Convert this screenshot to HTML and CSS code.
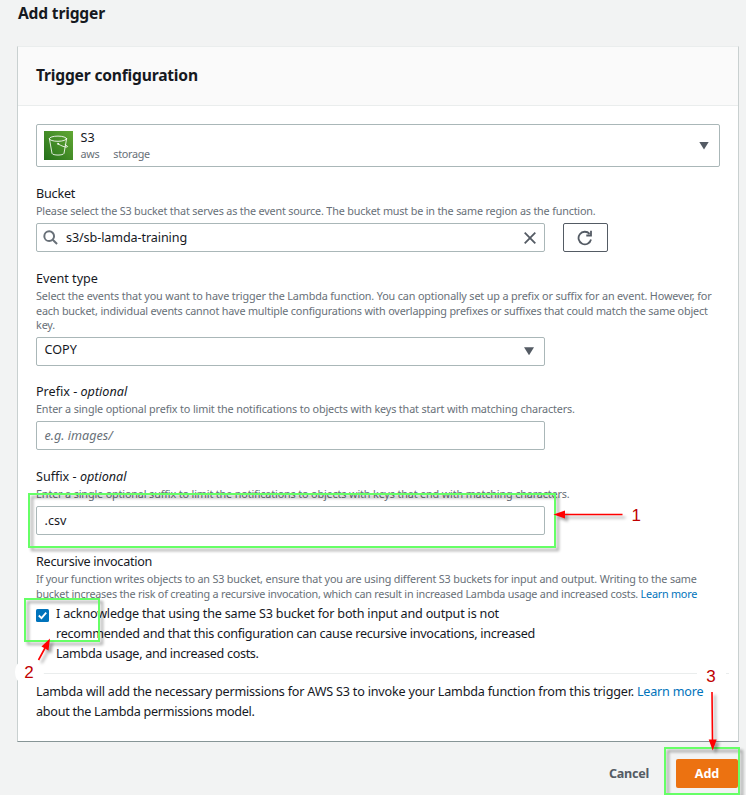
FILE: index.html
```html
<!DOCTYPE html>
<html lang="en">
<head>
<meta charset="utf-8">
<title>Add trigger</title>
<link rel="stylesheet" href="styles.css">
</head>
<body>
<main class="page">
  <h1 class="page-title">Add trigger</h1>
  <section class="card">
    <header class="card-header"><h2>Trigger configuration</h2></header>
    <div class="card-body">
      <div class="source-select">
        <svg class="s3" viewBox="0 0 29 29">
          <defs><linearGradient id="g" x1="0" y1="1" x2="1" y2="0"><stop offset="0" stop-color="#24701a"/><stop offset="1" stop-color="#62a834"/></linearGradient></defs>
          <rect width="29" height="29" fill="url(#g)"/>
          <g fill="none" stroke="#fff" stroke-width=".85" stroke-linecap="round" stroke-linejoin="round"><ellipse cx="14" cy="7.7" rx="8.6" ry="2.6"/><path d="M5.4 7.7 8 22.4c.8 2.200 11.200 2.200 12 0l2.600-14.700M14.200 13c3 1.800 7 3.500 9 3 1-.5-.2-1.300-2-2.200"/><circle cx="14" cy="12.800" r=".6"/></g>
        </svg>
        <div class="source-text"><div class="source-name">S3</div><div class="tags"><span>aws</span><span>storage</span></div></div>
        <i class="caret"></i>
      </div>

      <div class="field bucket">
        <label class="tight">Bucket</label>
        <p class="hint snug">Please select the S3 bucket that serves as the event source. The bucket must be in the same region as the function.</p>
        <div class="row">
          <div class="input searchbox"><svg class="search" viewBox="0 0 16 16"><circle cx="6.600" cy="6.600" r="5.200"/><path d="m10.400 10.400 4.600 4.600"/></svg><span class="value">s3/sb-lamda-training</span><svg class="clear" viewBox="0 0 12 12"><path d="m.7.700 10.600 10.600M11.300.7.700 11.300"/></svg></div>
          <button class="refresh" aria-label="Refresh"><svg viewBox="0 0 16 16"><path d="M14 9.500A6.300 6.300 0 1 1 12.600 3.900M14 .8v4.700H9.300"/></svg></button>
        </div>
      </div>

      <div class="field">
        <label>Event type</label>
        <p class="hint"><span>Select the events that you want to have trigger the Lambda function. You can optionally set up a prefix or suffix for an event. However, for</span><br><span class="snug">each bucket, individual events cannot have multiple configurations with overlapping prefixes or suffixes that could match the same object</span><br>key.</p>
        <div class="input select"><span class="value">COPY</span><i class="caret"></i></div>
      </div>

      <div class="field prefix">
        <label>Prefix - <em>optional</em></label>
        <p class="hint">Enter a single optional prefix to limit the notifications to objects with keys that start with matching characters.</p>
        <div class="input"><span class="value placeholder">e.g. images/</span></div>
      </div>

      <div class="field suffix">
        <label>Suffix - <em>optional</em></label>
        <p class="hint">Enter a single optional suffix to limit the notifications to objects with keys that end with matching characters.</p>
        <div class="input"><span class="value">.csv</span></div>
      </div>

      <div class="field recursive">
        <label class="tighter">Recursive invocation</label>
        <p class="hint"><span class="close">If your function writes objects to an S3 bucket, ensure that you are using different S3 buckets for input and output. Writing to the same</span><br><span class="dense">bucket increases the risk of creating a recursive invocation, which can result in increased Lambda usage and increased costs. <a>Learn more</a></span></p>
        <div class="ack"><svg class="check" viewBox="0 0 13 13"><rect width="13" height="13" rx="1.500"/><path d="m2.800 6.500 2.700 2.700 4.700-5.600"/></svg><p><span class="tight">I acknowledge that using the same S3 bucket for both input and output is not</span><br><span class="tighter">recommended and that this configuration can cause recursive invocations, increased</span><br><span class="tightest">Lambda usage, and increased costs.</span></p></div>
      </div>

      <p class="permissions"><span class="tight">Lambda will add the necessary permissions for AWS S3 to invoke your Lambda function from this trigger. <a>Learn more</a></span><br><span class="tighter">about the Lambda permissions model.</span></p>
    </div>
  </section>
  <footer class="actions"><button class="cancel">Cancel</button><button class="add">Add</button></footer>
</main>
<svg class="annotations" viewBox="0 0 746 795">
  <path class="mask" d="M22 660h15q7 4 7 12t-7 13H22q-7-5-7-13t7-12zM697 662h29v24h-29z"/>
  <g class="frames">
    <rect x="29" y="494" width="526" height="53"/>
    <rect x="25" y="599" width="74" height="42"/>
    <rect x="665" y="748" width="74" height="46"/>
  </g>
  <g class="arrows">
    <path class="shaft" d="M622.500 514.500H563M38.500 660l6.500-12M712 692l.5 50"/>
    <path class="head" d="m553.500 514.500 11.500-4v8zM50 638.500l-1.500 12-7-4zM712.700 750.500l-4-11h8z"/>
  </g>
  <g class="numbers"><text x="631.500" y="521">1</text><text x="24.300" y="678">2</text><text x="706.300" y="682">3</text></g>
</svg>
</body>
</html>
```
FILE: styles.css
```css
* { box-sizing: border-box; }
body { margin: 0; background: #f2f3f3; color: #16191f; font: 12.6px/20px "Noto Sans", sans-serif; }
.page { width: 746px; height: 795px; overflow: hidden; padding: 0 7px 0 17px; white-space: nowrap; }
h1, h2, p { margin: 0; }
.page-title { height: 46px; padding: 3px 0 0 1px; font-size: 15.6px; line-height: 20px; letter-spacing: -.18px; }
.card { width: 722px; height: 696px; background: #fff; border: 1px solid #c9d0d0; border-top-color: #eaeded; border-bottom-color: #879596; }
.card-header { height: 59px; padding: 18px; background: #fafafa; border-bottom: 1px solid #eaeded; }
h2 { font-size: 15.6px; line-height: 20px; letter-spacing: -.19px; }
.card-body { padding: 18px; }
.source-select { display: flex; height: 43px; width: 684px; padding: 0 10px 0 7px; align-items: center; border: 1px solid #aab7b8; border-radius: 2px; }
.s3 { width: 29px; height: 29px; }
.source-text { flex: 1; padding: 0 0 2px 7.500px; }
.source-name { line-height: 18px; }
.tags { display: flex; gap: 14px; font-size: 10.8px; line-height: 14px; letter-spacing: -.3px; color: #687078; }
.caret { width: 10px; height: 8px; background: #545b64; clip-path: polygon(0 0, 100% 0, 50% 100%); }
.field { margin-top: 17px; }
.field.prefix { margin-top: 16px; }
label { display: block; line-height: 20px; }
.hint { font-size: 10.8px; line-height: 14.4px; letter-spacing: -.14px; color: #687078; margin-bottom: 4px; }
.close { letter-spacing: -.164px; }
.snug { letter-spacing: -.183px; }
.dense { letter-spacing: -.228px; }
.tight { letter-spacing: -.195px; }
.tighter { letter-spacing: -.265px; }
.tightest { letter-spacing: -.32px; }
.bucket .hint, .prefix .hint, .suffix .hint { margin-bottom: 5px; }
.recursive .hint { margin-bottom: 3px; }
a { color: #0073bb; }
.row { display: flex; gap: 18px; }
.input { display: flex; align-items: center; width: 509px; height: 29px; border: 1px solid #aab7b8; border-radius: 2px; padding: 0 10px 0 7.500px; }
.searchbox { padding: 0 8px 0 6px; }
.select .value { padding-bottom: 2px; }
.value { flex: 1; }
.searchbox .value { letter-spacing: -.1px; }
.search, .clear, .refresh svg { fill: none; stroke: #545b64; stroke-width: 1.8; }
.search { width: 15px; height: 15px; margin-right: 8px; stroke-width: 2.1; stroke: #687078; }
.clear { width: 12px; height: 12px; }
.refresh { display: grid; place-items: center; width: 45px; height: 29px; background: #fff; border: 1px solid #545b64; border-radius: 2px; padding: 0 1px 0 0; }
.refresh svg { width: 16px; height: 16px; }
.placeholder { font-style: italic; color: #687078; }
.ack { display: flex; }
.check { width: 13px; height: 13px; margin: 5px 7px 0 0; fill: #0073bb; }
.check path { fill: none; stroke: #fff; stroke-width: 1.8; }
.permissions { margin: 9px -9px 0; padding: 8px 9px 0; border-top: 1px solid #eaeded; }
.actions { display: flex; justify-content: flex-end; padding: 17px 1px 0 0; }
button { font: 700 12.6px/20px "Noto Sans", sans-serif; }
.cancel { border: 0; background: none; color: #545b64; padding: 0 27px; letter-spacing: -.25px; }
.add { width: 62px; height: 29px; border: 0; border-radius: 2px; background: #ec7211; color: #fff; }
.annotations { position: absolute; left: 0; top: 0; width: 746px; height: 795px; pointer-events: none; }
.mask { fill: #fff; }
.frames { fill: none; stroke: #6f6; stroke-width: 2; filter: drop-shadow(3px 3px 1.5px rgba(0, 0, 0, .36)); }
.arrows { filter: drop-shadow(3px 3px 1.5px rgba(0, 0, 0, .36)); }
.shaft { fill: none; stroke: #f00; stroke-width: 1.6; }
.head { fill: #f00; }
.numbers { fill: #c00000; font: 17px "Liberation Sans", Arial, sans-serif; }
```
